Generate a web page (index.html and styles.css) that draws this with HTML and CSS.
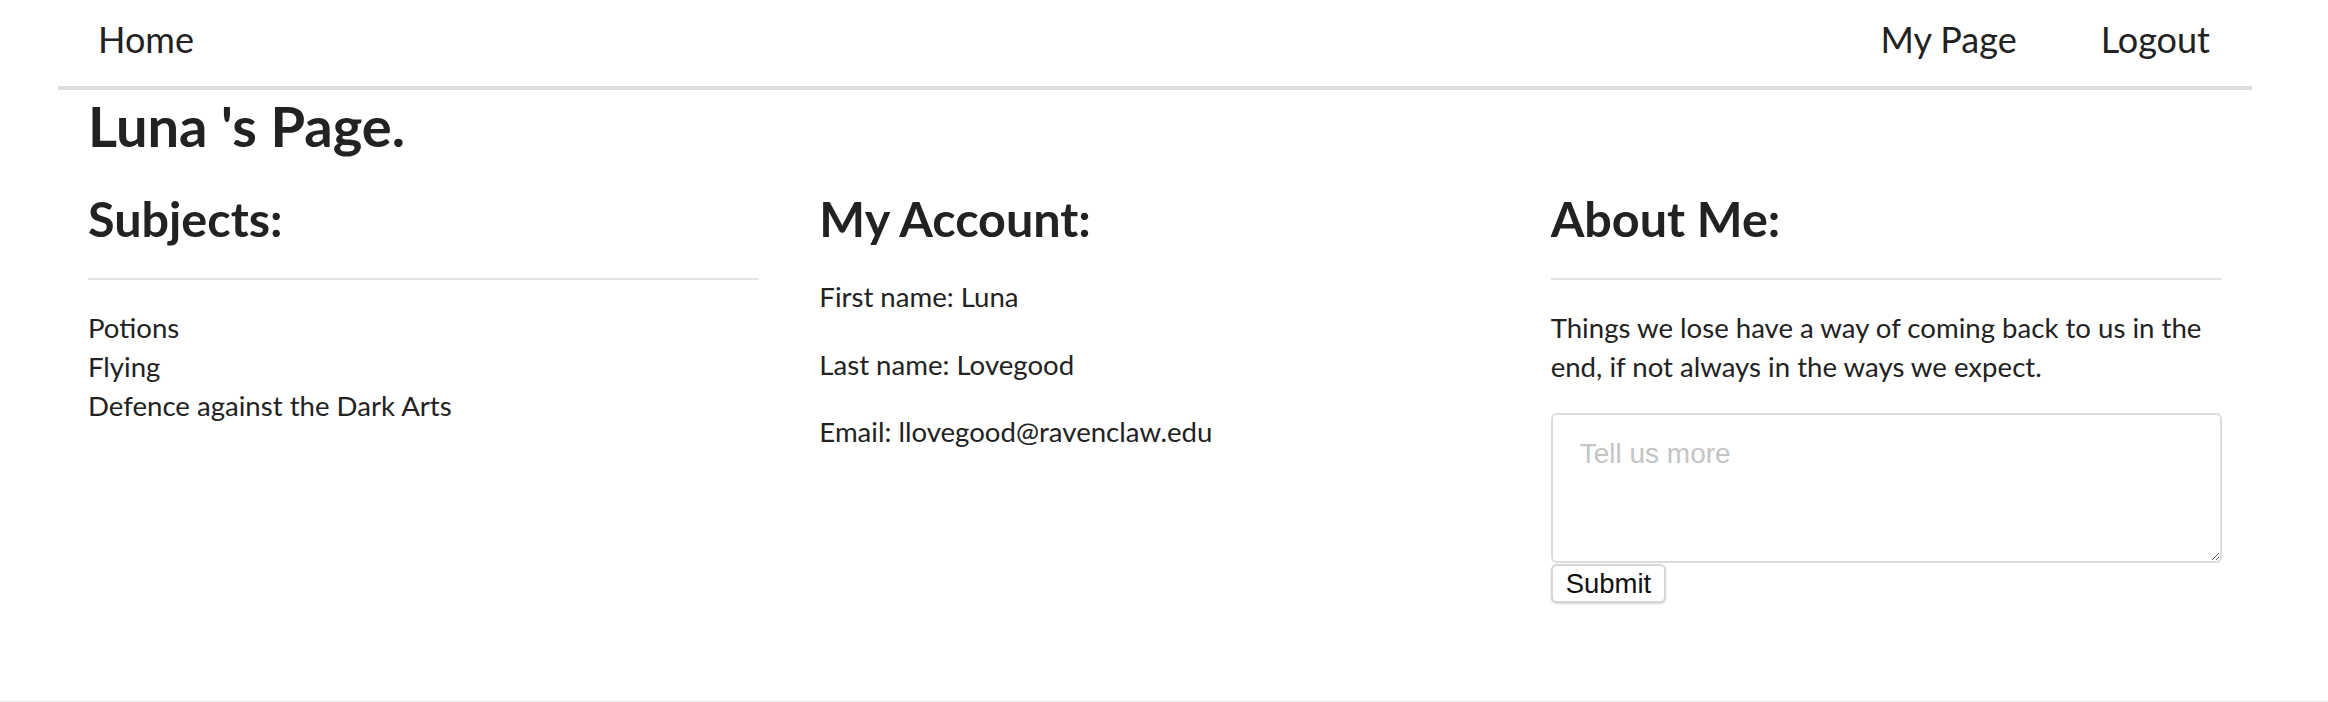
FILE: index.html
```html
<!DOCTYPE html>
<html lang="en">
<head>
<meta charset="utf-8">
<title>Luna 's Page.</title>
<link rel="stylesheet" href="styles.css">
</head>
<body>
<nav class="navbar">
  <a class="nav-link nav-home" href="#">Home</a>
  <div class="nav-right">
    <a class="nav-link" href="#">My Page</a>
    <a class="nav-link" href="#">Logout</a>
  </div>
</nav>
<main class="page">
  <h1 class="page-title">Luna 's Page.</h1>
  <div class="row">
    <section class="col">
      <h2 class="col-title">Subjects:</h2>
      <hr class="divider">
      <ul class="subject-list">
        <li>Potions</li>
        <li>Flying</li>
        <li>Defence against the Dark Arts</li>
      </ul>
    </section>
    <section class="col">
      <h2 class="col-title">My Account:</h2>
      <p class="info">First name: Luna</p>
      <p class="info">Last name: Lovegood</p>
      <p class="info">Email: llovegood@ravenclaw.edu</p>
    </section>
    <section class="col">
      <h2 class="col-title">About Me:</h2>
      <hr class="divider">
      <p class="about">Things we lose have a way of coming back to us in the end, if not always in the ways we expect.</p>
      <form class="about-form">
        <textarea class="about-input" placeholder="Tell us more"></textarea>
        <button class="submit-btn" type="button">Submit</button>
      </form>
    </section>
  </div>
</main>
<footer class="footer"></footer>
</body>
</html>
```

FILE: styles.css
```css
html, body {
  margin: 0;
  padding: 0;
  background: #fff;
}

body {
  font-family: "Lato", "Liberation Sans", sans-serif;
  color: #222;
  font-size: 27.6px;
  line-height: 38.7px;
}

.navbar {
  display: flex;
  justify-content: space-between;
  align-items: flex-start;
  height: 86px;
  margin: 0 76px 0 58px;
  border-bottom: 4px solid #dddddd;
}

.nav-right {
  display: flex;
}

.nav-link {
  display: block;
  padding: 17.5px 42px 0;
  font-size: 36px;
  line-height: 1.2;
  color: #222;
  text-decoration: none;
}

.nav-home {
  padding-left: 40px;
}

.page {
  margin: 0 76px 0 58px;
  padding-bottom: 98px;
}

.page-title {
  margin: 2px 0 0;
  padding: 0 30px;
  font-size: 56px;
  font-weight: 700;
  line-height: 1.2;
}

.row {
  display: grid;
  grid-template-columns: repeat(3, 1fr);
  padding-top: 30px;
}

.col {
  padding: 0 30px;
  min-width: 0;
}

.col-title {
  margin: 0 0 31px;
  font-size: 48.5px;
  font-weight: 700;
  line-height: 1.2;
}

.divider {
  margin: 0 0 29px;
  border: 0;
  border-top: 2px solid #e4e4e4;
  height: 0;
}

.subject-list {
  list-style: none;
  margin: 0;
  padding: 0;
}

.info {
  margin: 0 0 28.5px;
}

.about {
  margin: 0 0 26px;
}

.about-form {
  display: flex;
  flex-direction: column;
  align-items: flex-start;
  gap: 1px;
  margin: 0;
}

.about-input {
  display: block;
  box-sizing: border-box;
  width: 100%;
  height: 150px;
  margin: 0;
  padding: 23px 27px;
  border: 2px solid #dcdcdc;
  border-radius: 6px;
  font-family: "Liberation Sans", Arial, sans-serif;
  font-size: 28px;
  color: #222;
}

.about-input::placeholder {
  color: #c4c4c4;
}

.submit-btn {
  margin: 0;
  padding: 2px 13px;
  background: #fff;
  border: 2px solid #d6d6d6;
  border-radius: 6px;
  box-shadow: 0 1px 2px rgba(0, 0, 0, 0.18);
  font-family: "Liberation Sans", Arial, sans-serif;
  font-size: 27.5px;
  line-height: 1.15;
  color: #111;
}

.footer {
  border-top: 2px solid #e8e8e8;
  height: 20px;
}
```
